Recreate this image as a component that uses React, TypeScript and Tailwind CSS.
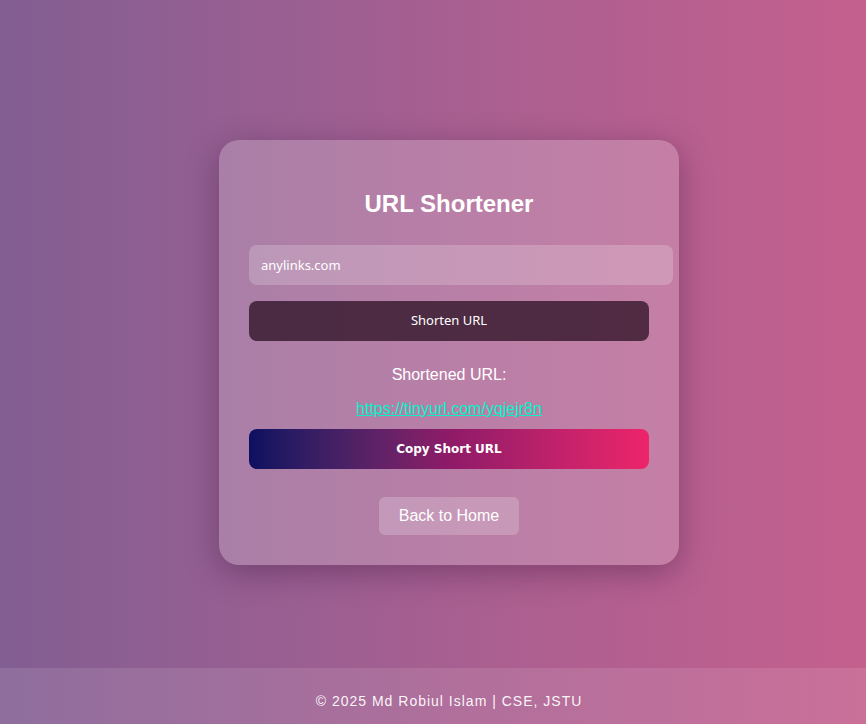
import React from "react";

export default function App() {
  return (
    <div className="min-h-screen w-full flex flex-col bg-gradient-to-r from-[#825e92] via-[#a65f91] to-[#c4608e] font-['Liberation_Sans',Arial,sans-serif]">
      <main className="flex justify-center pt-[140px] pl-[32px]">
        <div className="w-[460px] h-[425px] rounded-[20px] bg-white/20 shadow-[0_8px_32px_rgba(40,10,50,0.35)] px-[30px] pt-[48px] flex flex-col items-stretch">
          <h1 className="text-center text-white text-[24px] font-bold leading-[32px]">URL Shortener</h1>
          <input
            defaultValue="anylinks.com"
            className="mt-[25px] w-[424px] h-[40px] rounded-[8px] bg-white/20 px-[12px] text-[13px] text-white outline-none font-['Noto_Sans',sans-serif]"
          />
          <button className="mt-[16px] w-full h-[40px] rounded-[8px] bg-[#2a0f22]/75 text-white text-[13px] font-['Noto_Sans',sans-serif]">
            Shorten URL
          </button>
          <p className="mt-[24px] text-center text-white text-[16px] leading-[20px]">Shortened URL:</p>
          <a
            href="#"
            className="mt-[14px] text-center text-[#00f5c8] text-[16px] leading-[20px] underline"
          >
            https://tinyurl.com/yqjejr8n
          </a>
          <button className="mt-[10px] w-full h-[40px] rounded-[8px] bg-gradient-to-r from-[#0c1060] via-[#8e1a68] to-[#ee246a] text-white text-[12px] font-bold font-['DejaVu_Sans',sans-serif]">
            Copy Short URL
          </button>
          <div className="mt-[28px] flex justify-center">
            <button className="w-[140px] h-[38px] rounded-[6px] bg-white/20 text-white text-[16px]">
              Back to Home
            </button>
          </div>
        </div>
      </main>
      <footer className="mt-auto h-[56px] bg-white/10 flex items-start justify-center pt-[23px] pl-[32px] text-white/95 text-[14px] leading-[20px] tracking-[1px]">
        © 2025 Md Robiul Islam | CSE, JSTU
      </footer>
    </div>
  );
}
